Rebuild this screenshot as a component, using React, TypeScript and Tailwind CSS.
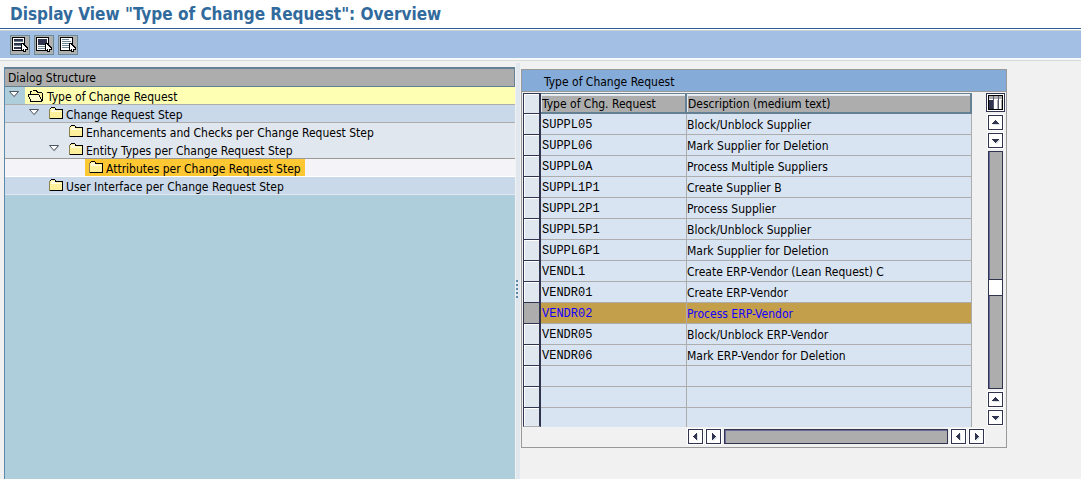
import type { ReactNode } from 'react';

const UI_FONT = "font-['DejaVu_Sans_Condensed','Noto_Sans',sans-serif]";

const cursorPath = 'M11 8h1v1h1v1h1v1h1v1h1v1h-2v2h-1v-2h-1v1h-1z';

function ListIcon({ children }: { children: ReactNode }) {
  return (
    <svg viewBox="0 0 18 18" className="size-[18px]" shapeRendering="crispEdges" aria-hidden="true">
      <path d="M1 1h13v14h-13z" fill="#000" />
      <path d="M2 2h11v12h-11z" fill="#fff" />
      {children}
      <path d={cursorPath} fill="#000" stroke="#000" strokeWidth="2" />
      <path d={cursorPath} fill="#fff" />
    </svg>
  );
}

function SelectAllIcon() {
  return (
    <ListIcon>
      <path d="M3 3h9v2h-9z M3 7h9v2h-9z M3 11h9v2h-9z" fill="#31344f" />
      <path d="M3 5h9v1h-9z M3 9h9v1h-9z" fill="#6d8794" />
    </ListIcon>
  );
}

function SelectBlockIcon() {
  return (
    <ListIcon>
      <path d="M3 3h9v6h-9z" fill="#31344f" />
      <path d="M3 10h9v1h-9z M3 12h9v1h-9z" fill="#6d8794" />
    </ListIcon>
  );
}

function DeselectIcon() {
  return (
    <ListIcon>
      <path d="M3 3h7v1h-7z M3 5h9v1h-9z M3 7h7v1h-7z M3 9h9v1h-9z M3 11h7v1h-7z" fill="#6d8794" />
    </ListIcon>
  );
}

function FolderIcon({ open }: { open?: boolean }) {
  return open ? (
    <svg viewBox="0 0 16 14" className="h-3.5 w-4 shrink-0" shapeRendering="crispEdges" aria-hidden="true">
      <path d="M4 3h1v-1h4v1h1v1h4v8h-11v-8h1z" fill="#fff3a0" />
      <path d="M4 2h1v-1h4v1h1v1h4v1h1v8h-1v-8h-5v-1h-1v-1h-4v1h-1v2h-1v-3z" fill="#000" />
      <path d="M1 6h10v1h1v2h1v3h-10v-2h-1v-2h-1z" fill="#fff9cc" />
      <path d="M0 5h11v1h-10v2h-1z M1 8h1v2h-1z M2 10h1v2h11v1h-12z M11 6h1v2h-1z M12 8h1v2h-1z M13 10h1v2h-1z" fill="#000" />
    </svg>
  ) : (
    <svg viewBox="0 0 16 14" className="h-3.5 w-4 shrink-0" shapeRendering="crispEdges" aria-hidden="true">
      <path d="M1 2h1v-1h4v1h1v1h6v9h-12z" fill="#fff09c" />
      <path d="M2 2h4v1h1v1h6v1h-11z" fill="#fffbdc" />
      <path d="M0 2h1v10h-1z" fill="#8c8450" />
      <path d="M1 1h1v-1h4v1h-4v1h-1z M6 1h1v1h7v10h-13v-1h12v-8h-7z" fill="#000" />
    </svg>
  );
}

function Expander() {
  return (
    <svg viewBox="0 0 12 8" className="h-2 w-3" aria-hidden="true">
      <path d="M2.5 2 H11 L6.5 7.5 Z" fill="#a9b4bc" />
      <path d="M1.5 1.5 H10.5 L6 6.5 Z" fill="#fff" stroke="#4d5660" />
    </svg>
  );
}

type Node = {
  label: string;
  indent: string;
  row: string;
  open?: boolean;
  expandable?: boolean;
  selected?: boolean;
};

const nodes: Node[] = [
  { label: 'Type of Change Request', indent: 'w-5', row: 'border-[#adadad] bg-[#ffffb4]', open: true, expandable: true },
  { label: 'Change Request Step', indent: 'w-10', row: 'border-[#adadad] bg-[#cad9e9]', expandable: true },
  { label: 'Enhancements and Checks per Change Request Step', indent: 'w-15', row: 'border-[#e0e7ee] bg-[#e0e7ee]' },
  { label: 'Entity Types per Change Request Step', indent: 'w-15', row: 'border-[#999999] bg-[#e0e7ee]', expandable: true },
  { label: 'Attributes per Change Request Step', indent: 'w-20', row: 'border-white bg-[#f3f3f8]', selected: true },
  { label: 'User Interface per Change Request Step', indent: 'w-10', row: 'border-[#e0e7ee] bg-[#cad9e9]' },
];

function TreeRow({ node }: { node: Node }) {
  return (
    <li className={`flex h-[18px] border-b ${node.row}`}>
      <span className={`flex shrink-0 justify-end pt-[3px] pr-[5px] ${node.indent} ${node.open ? 'bg-[#afcedb]' : ''}`}>
        {node.expandable && (
          <button type="button" aria-label={`Collapse ${node.label}`} className="h-2 w-3">
            <Expander />
          </button>
        )}
      </span>
      <button
        type="button"
        className={`flex items-start whitespace-nowrap pt-0.5 pr-1 leading-4 ${node.open ? 'pl-[3px]' : 'pl-1'} ${node.selected ? 'bg-[#ffc832]' : ''}`}
      >
        <FolderIcon open={node.open} />
        <span className={node.open ? 'pl-[3px]' : 'pl-px'}>{node.label}</span>
      </button>
    </li>
  );
}

const rows: { code: string; text: string; selected?: boolean }[] = [
  { code: 'SUPPL05', text: 'Block/Unblock Supplier' },
  { code: 'SUPPL06', text: 'Mark Supplier for Deletion' },
  { code: 'SUPPL0A', text: 'Process Multiple Suppliers' },
  { code: 'SUPPL1P1', text: 'Create Supplier B' },
  { code: 'SUPPL2P1', text: 'Process Supplier' },
  { code: 'SUPPL5P1', text: 'Block/Unblock Supplier' },
  { code: 'SUPPL6P1', text: 'Mark Supplier for Deletion' },
  { code: 'VENDL1', text: 'Create ERP-Vendor (Lean Request) C' },
  { code: 'VENDR01', text: 'Create ERP-Vendor' },
  { code: 'VENDR02', text: 'Process ERP-Vendor', selected: true },
  { code: 'VENDR05', text: 'Block/Unblock ERP-Vendor' },
  { code: 'VENDR06', text: 'Mark ERP-Vendor for Deletion' },
  { code: '', text: '' },
  { code: '', text: '' },
  { code: '', text: '' },
];

const arrows = {
  up: 'M3 8h7v-1h-1v-1h-1v-1h-1v-1h-1v1h-1v1h-1v1h-1z',
  down: 'M3 5h7v1h-1v1h-1v1h-1v1h-1v-1h-1v-1h-1v-1h-1z',
  left: 'M8 3v7h-1v-1h-1v-1h-1v-1h-1v-1h1v-1h1v-1h1v-1z',
  right: 'M5 3v7h1v-1h1v-1h1v-1h1v-1h-1v-1h-1v-1h-1v-1z',
};

function ArrowButton({ dir, label }: { dir: keyof typeof arrows; label: string }) {
  return (
    <button type="button" aria-label={label} className="size-[15px] shrink-0 border border-[#31344f] bg-white outline-1 outline-white">
      <svg viewBox="0 0 13 13" className="size-[13px]" shapeRendering="crispEdges" aria-hidden="true">
        <path d={arrows[dir]} fill="#d8e2e6" transform="translate(1 1)" />
        <path d={arrows[dir]} fill="#31344f" />
      </svg>
    </button>
  );
}

function ToolButton({ label, children }: { label: string; children: ReactNode }) {
  return (
    <button type="button" aria-label={label} className="flex size-5 items-center justify-center border border-[#6a8a98] bg-[#b0b0b0]">
      {children}
    </button>
  );
}

function ColumnHead({ children }: { children: ReactNode }) {
  return (
    <th className="border-t border-r-2 border-b-2 border-[#638192] p-0 text-left font-normal">
      <div className="h-[17px] truncate border-t border-l border-[#e0e7ee] bg-[#adadad] leading-[17px]">{children}</div>
    </th>
  );
}

export default function App() {
  return (
    <div className={`flex min-h-screen flex-col bg-[#f1f1f1] text-[12px] text-black ${UI_FONT}`}>
      <header>
        <h1 className="h-7 bg-white pl-2.5 text-[17px] leading-7 font-bold text-[#316a9c]">
          Display View "Type of Change Request": Overview
        </h1>
        <div className="h-[3px] border-t border-b border-t-[#2a5f98] border-b-[#c8d0d8] bg-white" />
        <div className="flex h-[27px] items-center gap-1 bg-[#a3c0e4] px-2.5">
          <ToolButton label="Select all"><SelectAllIcon /></ToolButton>
          <ToolButton label="Select block"><SelectBlockIcon /></ToolButton>
          <ToolButton label="Deselect all"><DeselectIcon /></ToolButton>
        </div>
        <div className="h-[3px] border-b border-[#d2dcd8] bg-[#f8f8f8]" />
      </header>

      <main className="grid flex-1 grid-cols-[516fr_5px_560fr] pt-0.5">
        <section className="mt-1 flex min-w-0 flex-col pr-px pl-1">
          <div className="flex flex-1 flex-col border-l border-[#5b8aad] bg-[#afcedb]">
            <h2 className="h-5 border-t-2 border-r border-b border-[#638192] bg-[#adadad] pl-[3px] leading-[18px]">Dialog Structure</h2>
            <ul>
              {nodes.map((n) => (
                <TreeRow key={n.label} node={n} />
              ))}
            </ul>
          </div>
        </section>

        <div className="flex flex-col items-start border-r border-[#f1f1f1] bg-[#e0e7ee] pt-[217px]">
          <div className="flex w-0.5 flex-col gap-0.5">
            {[0, 1, 2, 3, 4].map((i) => (
              <span key={i} className="size-0.5 bg-[#5b8aad]" />
            ))}
          </div>
        </div>

        <section className="min-w-0 pt-1.5">
          <div className="w-full max-w-[486px] border border-[#999999]">
            <h2 className="h-[22px] border-b border-[#999999] bg-[#85abd8] pl-[22px] leading-[24px]">Type of Change Request</h2>
            <div className="flex justify-between pt-px pr-px pl-px">
              <table className="w-[449px] table-fixed border-separate border-spacing-0">
                <colgroup>
                  <col className="w-[18px]" />
                  <col className="w-[146px]" />
                  <col />
                </colgroup>
                <thead>
                  <tr className="h-[21px]">
                    <th className="border border-r-2 border-[#31344f] bg-[#e0e7ee] p-0">
                      <button type="button" aria-label="Select all rows" className="block h-[19px] w-full border-t border-l border-white" />
                    </th>
                    <ColumnHead>Type of Chg. Request</ColumnHead>
                    <ColumnHead>Description (medium text)</ColumnHead>
                  </tr>
                </thead>
                <tbody>
                  {rows.map((r, i) => {
                    const last = i === rows.length - 1;
                    const line = last ? 'border-r border-[#adadad]' : 'border-r border-b border-[#adadad]';
                    const tone = r.selected ? 'bg-[#c49f4b] text-[#1400ff]' : 'bg-[#d9e4f2]';
                    return (
                      <tr key={i} className={last ? 'h-[19px]' : 'h-[21px]'}>
                        <td
                          className={`border-r-2 border-b border-l border-[#31344f] p-0 ${r.selected ? 'bg-[#adadad]' : 'bg-[#e0e7ee]'} ${last ? 'border-b-[#adadad]' : ''}`}
                        >
                          <button
                            type="button"
                            aria-label={`Select row ${i + 1}`}
                            className={`block w-full border-t border-l ${last ? 'h-[18px]' : 'h-5'} ${r.selected ? 'border-[#adadad]' : 'border-white'}`}
                          />
                        </td>
                        <td className={`p-0 pt-0.5 pl-px font-['Liberation_Mono',monospace] leading-4 ${line} ${tone}`}>{r.code}</td>
                        <td className={`truncate p-0 pt-0.5 leading-4 ${line} ${tone}`}>{r.text}</td>
                      </tr>
                    );
                  })}
                </tbody>
              </table>

              <div className="flex w-[19px] shrink-0 flex-col items-center">
                <button type="button" aria-label="Table settings" className="size-[19px] border border-[#31344f] bg-white">
                  <svg viewBox="0 0 17 17" className="size-[17px]" shapeRendering="crispEdges" aria-hidden="true">
                    <path d="M1 1h15v15h-15z" fill="#000" />
                    <path d="M2 2h13v13h-13z" fill="#adadad" />
                    <path d="M2 5h13v1h-13z" fill="#fff" />
                    <path d="M2 6h4v9h-4z" fill="#31344f" />
                    <path d="M6 2h1v13h-1z M11 2h1v13h-1z" fill="#55586e" />
                    <path d="M7 5h3v10h-3z M12 5h2v10h-2z" fill="#fff" />
                  </svg>
                </button>
                <div className="flex flex-1 flex-col gap-[3px] pt-[3px] pb-0.5">
                  <ArrowButton dir="up" label="Page up" />
                  <ArrowButton dir="down" label="Line down" />
                  <div className="flex w-[15px] flex-1 flex-col border border-[#31344f] bg-[#adadad]">
                    <div className="grow-[127] border-l border-[#6b6b9c]" />
                    <div className="h-[17px] border-y border-[#31344f] bg-white" />
                    <div className="grow-[92] border-l border-[#6b6b9c]" />
                  </div>
                  <ArrowButton dir="up" label="Line up" />
                  <ArrowButton dir="down" label="Page down" />
                </div>
              </div>
            </div>
            <div className="flex gap-[3px] pt-0.5 pr-[22px] pb-[3px] pl-[166px]">
              <ArrowButton dir="left" label="First column" />
              <ArrowButton dir="right" label="Next column" />
              <div className="h-[15px] flex-1 border border-[#31344f] bg-[#adadad]">
                <div className="h-full border-t border-l border-[#6b6b9c]" />
              </div>
              <ArrowButton dir="left" label="Previous column" />
              <ArrowButton dir="right" label="Last column" />
            </div>
          </div>
        </section>
      </main>
    </div>
  );
}
